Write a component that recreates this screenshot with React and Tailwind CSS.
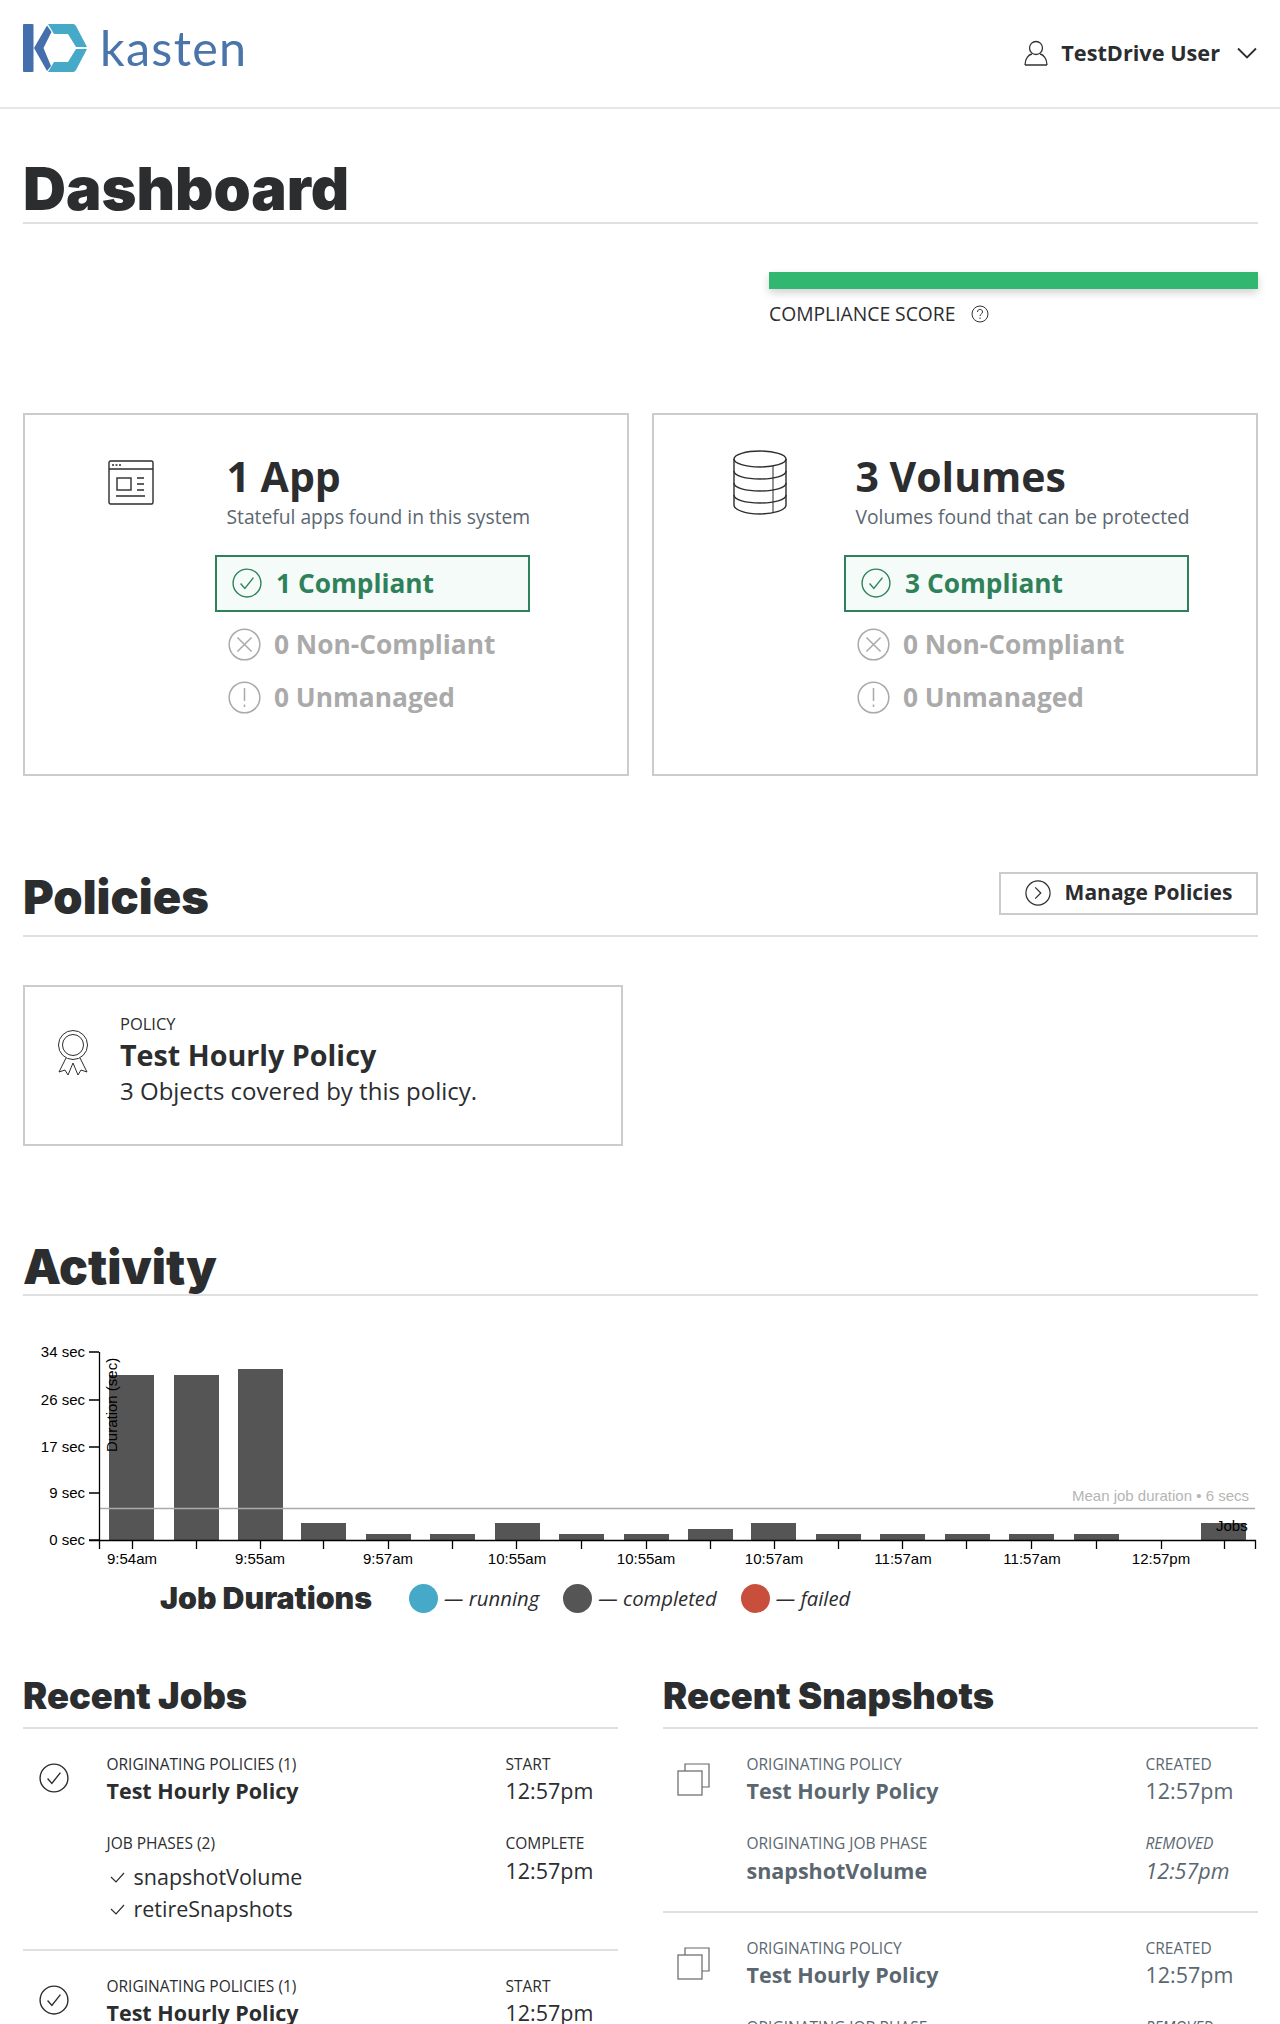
import React from "react";

const Circle = ({ children, size = 28, color = "currentColor", sw = 1.3 }) => (
  <svg width={size} height={size} viewBox="0 0 28 28" fill="none" stroke={color} strokeWidth={sw} className="shrink-0">
    <circle cx="14" cy="14" r="13" />
    {children}
  </svg>
);
const CheckC = (p) => <Circle {...p}><path d="M8 14.5l4 4.5 8-10" /></Circle>;
const XC = (p) => <Circle {...p}><path d="M8 8l12 12M20 8L8 20" /></Circle>;
const BangC = (p) => <Circle {...p}><path d="M14 6v11M14 20v2" /></Circle>;

const Logo = () => (
  <svg width="66" height="48" viewBox="23 24 66 48" className="shrink-0">
    <rect x="23" y="24" width="10.5" height="48" rx="1" fill="#456fac" />
    <path d="M47 25.500L51.500 32L43.500 48L51 66L47 71L34 48Z" fill="#456fac" />
    <path d="M48 24H73Q75 24 76 26L87 47H76L68 34H54L48 24Z" fill="#46a9c8" />
    <path d="M87 49L76 70Q75 72 73 72H48L54 62H68L76 49Z" fill="#46a9c8" />
  </svg>
);

const AppIcon = () => (
  <svg width="46" height="45" viewBox="0 0 46 45" fill="none" stroke="#2b2d2f" strokeWidth="1.4" className="shrink-0">
    <rect x="1" y="1" width="44" height="43" rx="1.500" />
    <path d="M1 9h44" />
    <path d="M4 5h2M7.500 5h2M11 5h2" strokeWidth="1.600" />
    <rect x="9" y="18" width="14" height="12" />
    <path d="M29 18h7M29 24h7M29 30h7M8 36h29" />
  </svg>
);
const DbIcon = () => (
  <svg width="54" height="65" viewBox="0 0 54 65" fill="none" stroke="#2b2d2f" strokeWidth="1.400" className="shrink-0">
    <ellipse cx="27" cy="9" rx="26" ry="8" />
    <path d="M1 9v46c0 5 12 9 26 9s26-4 26-9V9" />
    <path d="M1 21c0 5 12 8 26 8s26-3 26-8M1 33c0 5 12 8 26 8s26-3 26-8M1 45c0 5 12 8 26 8s26-3 26-8" />
    <path d="M40 16v47" strokeWidth="1" />
  </svg>
);
const Ribbon = () => (
  <svg width="32" height="46" viewBox="0 0 32 46" fill="none" stroke="#2b2d2f" strokeWidth="1" className="shrink-0">
    <circle cx="16" cy="15" r="14.500" />
    <circle cx="16" cy="15" r="10.500" />
    <path d="M9 28L2 42l6-2 3 5 5-12 5 12 3-5 6 2-7-14" />
  </svg>
);
const Copies = () => (
  <svg width="33" height="33" viewBox="0 0 33 33" fill="none" stroke="#666" strokeWidth="1.200" className="shrink-0">
    <path d="M8 8V1h24v23h-7" />
    <rect x="1" y="8" width="24" height="24" />
  </svg>
);
const User = () => (
  <svg width="24" height="26" viewBox="0 0 24 26" fill="none" stroke="#333" strokeWidth="1.300">
    <circle cx="12" cy="8" r="6.500" />
    <path d="M1 25c0-7 4-10.500 7-11M23 25c0-7-4-10.500-7-11M1 25h22" />
  </svg>
);

const H2 = ({ children, cls }) => (
  <h2 className={`font-['Inter',sans-serif] font-black text-[#2b2d2f] leading-none ${cls}`}>{children}</h2>
);

const Row = ({ cls, Icon, color, children }) => (
  <div className={`flex items-center ${cls}`}>
    <Icon size={33} color={color} />
    <span className="ml-[13px] text-[26.300px] font-bold leading-none" style={{ color }}>{children}</span>
  </div>
);

const Card = ({ icon, iconW, title, sub, count, boxW, cls }) => (
  <div className={`border-2 border-[#cccccc] h-[363px] flex ${cls}`}>
    <div className={`${iconW}`}>{icon}</div>
    <div className="flex flex-col">
      <div className="pl-[11.500px] text-[41px] font-bold leading-none text-[#2b2d2f] mt-[41px] h-[46px]">{title}</div>
      <div className="pl-[11.500px] text-[19.250px] text-[#5b6770] leading-none mt-[5px] h-[18px]">{sub}</div>
      <div className={`mt-[30px] ${boxW} h-[57px] border-2 border-[#2f8159] bg-[#f5fbf8] flex items-center pl-[15px] pb-[1px]`}>
        <CheckC size={30} color="#2f8159" />
        <span className="ml-[14px] text-[26.300px] font-bold text-[#2f8159] leading-none">{count} Compliant</span>
      </div>
      <Row cls="mt-[16px] pl-[13px] h-[33px]" Icon={XC} color="#aaaaaa">0 Non-Compliant</Row>
      <Row cls="mt-[20px] pl-[13px] h-[33px]" Icon={BangC} color="#aaaaaa">0 Unmanaged</Row>
    </div>
  </div>
);

const bars = [
  [109, 165], [174, 165], [238, 171], [301, 17], [366, 6], [430, 6], [495, 17], [559, 6], [624, 6],
  [688, 11], [751, 17], [816, 6], [880, 6], [945, 6], [1009, 6], [1074, 6], [1201, 17],
];
const ticks = [132, 196, 260, 323, 388, 452, 516, 581, 646, 710, 774, 838, 902, 966, 1031, 1096, 1161, 1224, 1255];
const labels = [[132, "9:54am"], [260, "9:55am"], [388, "9:57am"], [517, "10:55am"], [646, "10:55am"], [774, "10:57am"], [903, "11:57am"], [1032, "11:57am"], [1161, "12:57pm"]];
const yT = [[1352, "34 sec"], [1400, "26 sec"], [1447, "17 sec"], [1493, "9 sec"], [1540, "0 sec"]];

const Chart = () => (
  <svg width="1280" height="240" viewBox="0 1330 1280 240" className="block" fontFamily="'Liberation Sans',sans-serif" fontSize="15">
    {bars.map(([x, h]) => <rect key={x} x={x} y={1540 - h} width="45" height={h} fill="#555555" />)}
    <path d="M99 1508.500H1255" stroke="#aaaaaa" strokeWidth="1.500" />
    <path d="M99.500 1352V1549M89 1352h10M89 1400h10M89 1447h10M89 1493h10M89 1540h10M89 1540.500H1256" stroke="#000" strokeWidth="1.300" fill="none" />
    {ticks.map((x) => <path key={x} d={`M${x}.5 1540v9`} stroke="#000" strokeWidth="1.300" />)}
    {yT.map(([y, t]) => <text key={y} x="85" y={y + 5} textAnchor="end" fill="#000">{t}</text>)}
    {labels.map(([x, t], i) => <text key={i} x={x} y="1564" textAnchor="middle" fill="#000">{t}</text>)}
    <text x="1249" y="1501" textAnchor="end" fill="#b5b5b5">Mean job duration • 6 secs</text>
    <text x="1216" y="1531" fill="#000">Jobs</text>
    <text transform="translate(117 1452) rotate(-90)" fill="#000">Duration (sec)</text>
  </svg>
);

const Legend = ({ color, label, cls }) => (
  <div className={`flex items-center ${cls}`}>
    <span className="w-[29px] h-[29px] rounded-full" style={{ backgroundColor: color }} />
    <span className="ml-[6px] text-[20.300px] italic text-[#2b2d2f] leading-none">— {label}</span>
  </div>
);

const Label = ({ children, cls = "" }) => <div className={`text-[15.500px] leading-[20px] h-[20px] ${cls}`}>{children}</div>;

const Job = ({ phases }) => (
  <div className="flex pt-[25px] text-[#2b2d2f]">
    <div className="w-[83.500px] pl-[16px] pt-[9px]"><CheckC size={30} color="#2b2d2f" /></div>
    <div className="w-[399px]">
      <Label>ORIGINATING POLICIES (1)</Label>
      <div className="text-[21.500px] font-bold leading-[30px] mt-[2px]">Test Hourly Policy</div>
      {phases && (
        <>
          <Label cls="mt-[27px]">JOB PHASES (2)</Label>
          {["snapshotVolume", "retireSnapshots"].map((t, i) => (
            <div key={t} className={`flex items-center h-[32px] ${i === 0 ? "mt-[8px]" : ""}`}>
              <svg width="27" height="14" viewBox="0 0 27 14" fill="none" stroke="#2b2d2f" strokeWidth="1.200"><path d="M4 7l5 5 8-9" /></svg>
              <span className="text-[21.500px] leading-none">{t}</span>
            </div>
          ))}
        </>
      )}
    </div>
    <div>
      <Label>START</Label>
      <div className="text-[21.500px] leading-[30px] mt-[2px]">12:57pm</div>
      {phases && (
        <>
          <Label cls="mt-[27px]">COMPLETE</Label>
          <div className="text-[21.500px] leading-[30px] mt-[3px]">12:57pm</div>
        </>
      )}
    </div>
  </div>
);

const Snap = () => (
  <div className="flex pt-[25px] text-[#5b6770]">
    <div className="w-[83.500px] pl-[14px] pt-[9px]"><Copies /></div>
    <div className="w-[399px]">
      <Label>ORIGINATING POLICY</Label>
      <div className="text-[21.500px] font-bold leading-[30px] mt-[2px]">Test Hourly Policy</div>
      <Label cls="mt-[27px]">ORIGINATING JOB PHASE</Label>
      <div className="text-[21.500px] font-bold leading-[30px] mt-[3px]">snapshotVolume</div>
    </div>
    <div>
      <Label>CREATED</Label>
      <div className="text-[21.500px] leading-[30px] mt-[2px]">12:57pm</div>
      <Label cls="mt-[27px] italic">REMOVED</Label>
      <div className="text-[21.500px] leading-[30px] mt-[3px] italic">12:57pm</div>
    </div>
  </div>
);

export default function App() {
  return (
    <div className="w-[1280px] h-[2024px] overflow-hidden bg-white font-['Open_Sans',sans-serif] text-[#2b2d2f]">
      <header className="h-[109px] border-b-2 border-[#e6e6e6] flex items-start pl-[23px] pr-[23px]">
        <div className="mt-[24px]"><Logo /></div>
        <span className="ml-[11px] mt-[17px] font-['Lato',sans-serif] font-normal text-[48.500px] leading-[60px] tracking-[1.300px] text-[#4a75ab]">kasten</span>
        <div className="ml-auto mt-[39px] flex items-center">
          <User />
          <span className="ml-[13px] text-[21.700px] font-bold leading-[28px]">TestDrive User</span>
          <svg className="ml-[17px]" width="20" height="12" viewBox="0 0 20 12" fill="none" stroke="#2b2d2f" strokeWidth="1.800"><path d="M1 1.500l9 9 9-9" /></svg>
        </div>
      </header>

      <main className="px-[23px] w-[1258px] box-content">
        <div className="w-[1235px]">
          <H2 cls="text-[59.500px] h-[115px] pt-[50px] border-b-2 border-[#e0e0e0]">Dashboard</H2>

          <div className="ml-[746px] mt-[48px] h-[17px] bg-[#31b76f] shadow-[0_4px_8px_rgba(0,0,0,0.18)]" />
          <div className="ml-[746px] mt-[13px] flex items-center h-[24px]">
            <span className="text-[19.300px] leading-none">COMPLIANCE SCORE</span>
            <svg className="ml-[16px]" width="18" height="18" viewBox="0 0 18 18" fill="none" stroke="#333" strokeWidth="1"><circle cx="9" cy="9" r="8" /><path d="M6.500 7c0-3.500 5-3.500 5 0 0 2-2.500 2-2.500 4M9 12.500v1.500" /></svg>
          </div>

          <div className="mt-[87px] flex justify-between">
            <Card cls="w-[606px]" iconW="w-[190px] pt-[45px] pl-[83px]" icon={<AppIcon />} title="1 App" sub="Stateful apps found in this system" count="1" boxW="w-[315px]" />
            <Card cls="w-[606px]" iconW="w-[190px] pt-[35px] pl-[79px]" icon={<DbIcon />} title="3 Volumes" sub="Volumes found that can be protected" count="3" boxW="w-[345px]" />
          </div>

          <div className="mt-[96px] h-[65px] border-b-2 border-[#e0e0e0] flex justify-between items-start">
            <H2 cls="text-[47px] pt-[1px]">Policies</H2>
            <div className="w-[259px] h-[43px] border-2 border-[#cccccc] flex items-center justify-center pb-[2px]">
              <Circle size={26}><path d="M11 8l6 6-6 6" /></Circle>
              <span className="ml-[14px] text-[21px] font-bold leading-none">Manage Policies</span>
            </div>
          </div>

          <div className="mt-[48px] w-[600px] h-[161px] border-2 border-[#cccccc] flex">
            <div className="w-[95px] pl-[32px] pt-[43px]"><Ribbon /></div>
            <div className="pt-[27px]">
              <div className="text-[16.500px] leading-[20px]">POLICY</div>
              <div className="text-[28.700px] font-bold leading-[36px] mt-[3px]">Test Hourly Policy</div>
              <div className="text-[24px] leading-[30px] mt-[3px]">3 Objects covered by this policy.</div>
            </div>
          </div>

          <H2 cls="text-[48px] h-[150px] pt-[97px] border-b-2 border-[#e0e0e0]">Activity</H2>
        </div>

        <div className="-ml-[23px] mt-[34px]"><Chart /></div>

        <div className="w-[1235px]">
          <div className="flex items-center h-[30px] mt-[13px] pl-[137px]">
            <H2 cls="text-[30.300px]">Job Durations</H2>
            <Legend cls="ml-[37px]" color="#46a9c8" label="running" />
            <Legend cls="ml-[24px]" color="#555555" label="completed" />
            <Legend cls="ml-[24px]" color="#c94f3d" label="failed" />
          </div>

          <div className="mt-[50px] flex justify-between">
            <div className="w-[595px]">
              <H2 cls="text-[36.300px] h-[66px] pt-[15px] border-b-2 border-[#e0e0e0]">Recent Jobs</H2>
              <div className="h-[222px] border-b-2 border-[#e0e0e0]"><Job phases /></div>
              <Job />
            </div>
            <div className="w-[595px]">
              <H2 cls="text-[36.300px] h-[66px] pt-[15px] border-b-2 border-[#e0e0e0]">Recent Snapshots</H2>
              <div className="h-[184px] border-b-2 border-[#e0e0e0]"><Snap /></div>
              <Snap />
            </div>
          </div>
        </div>
      </main>
    </div>
  );
}
